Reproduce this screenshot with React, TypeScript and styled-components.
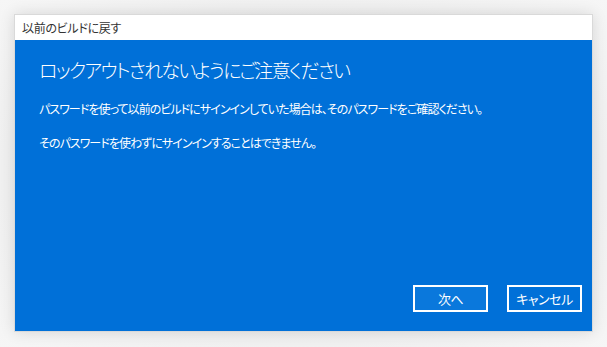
import React, {FC} from "react";
import styled, {createGlobalStyle} from "styled-components";

const GlobalStyle = createGlobalStyle`
  html, body {
    margin: 0;
    padding: 0;
    background: #f3f3f3;
  }
  body {
    font-family: "Noto Sans CJK JP", "Noto Sans", sans-serif;
    font-feature-settings: "palt";
  }
`;

const Page = styled.div`
  width: 607px;
  height: 347px;
  padding: 14px 0 0 14px;
  box-sizing: border-box;
  background: radial-gradient(ellipse at center, #e6e6e6 0%, #f0f0f0 70%, #f6f6f6 100%);
`;

const Window = styled.div`
  width: 579px;
  height: 318px;
  box-sizing: border-box;
  border: 1px solid #d9d9d9;
  box-shadow: 0 0 14px rgba(0, 0, 0, 0.12);
  display: flex;
  flex-direction: column;
  background: #ffffff;
`;

const TitleBar = styled.div`
  height: 25px;
  padding-left: 7px;
  display: flex;
  align-items: center;
  font-size: 12px;
  letter-spacing: -0.3px;
  color: #333333;
  background: #ffffff;
`;

const Body = styled.div`
  flex: 1;
  background: #0070d8;
  color: #ffffff;
  padding: 16px 10px 19px 24px;
  display: flex;
  flex-direction: column;
`;

const Heading = styled.h1`
  margin: 0;
  font-size: 19px;
  font-weight: 300;
  line-height: 28px;
  letter-spacing: -1.7px;
`;

const Paragraph = styled.p`
  margin: ${(p: {$top: number}) => p.$top}px 0 0;
  font-size: 12px;
  line-height: 18px;
  letter-spacing: -0.95px;
`;

const Footer = styled.div`
  margin-top: auto;
  display: flex;
  justify-content: flex-end;
  gap: 19px;
`;

const Button = styled.button`
  width: 75px;
  height: 27px;
  box-sizing: border-box;
  border: 2px solid #ffffff;
  background: ${(p: {$primary?: boolean}) => (p.$primary ? "#0a78dc" : "#0070d8")};
  color: #ffffff;
  font-family: inherit;
  font-feature-settings: "palt";
  font-size: 13px;
  letter-spacing: -0.5px;
  padding: 0;
  cursor: pointer;
`;

const App: FC = () => {
  return (
    <>
      <GlobalStyle/>
      <Page>
        <Window>
          <TitleBar>以前のビルドに戻す</TitleBar>
          <Body>
            <Heading>ロックアウトされないようにご注意ください</Heading>
            <Paragraph $top={16}>パスワードを使って以前のビルドにサインインしていた場合は、そのパスワードをご確認ください。</Paragraph>
            <Paragraph $top={16}>そのパスワードを使わずにサインインすることはできません。</Paragraph>
            <Footer>
              <Button $primary>次へ</Button>
              <Button>キャンセル</Button>
            </Footer>
          </Body>
        </Window>
      </Page>
    </>
  );
};

export default App;
